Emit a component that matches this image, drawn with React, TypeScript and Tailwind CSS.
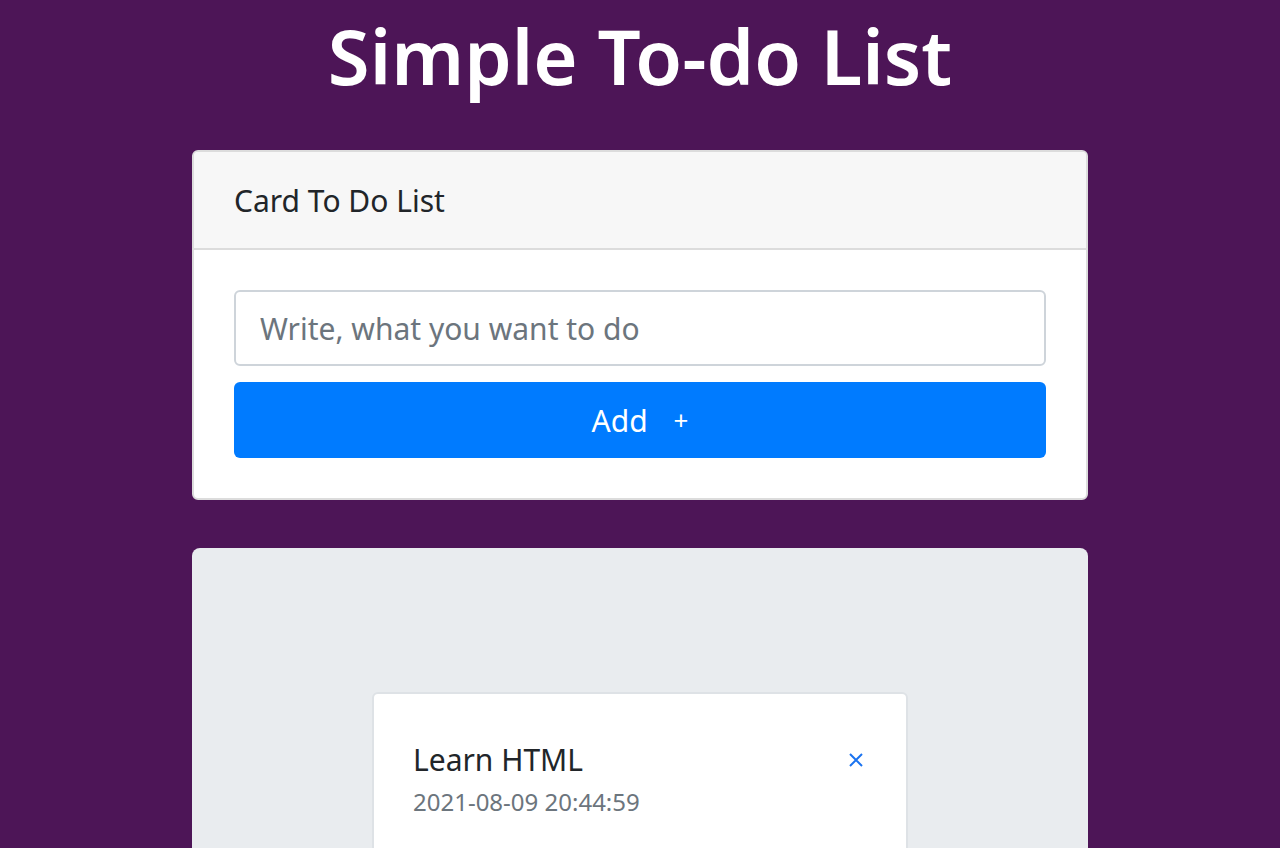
import React, { useState } from 'react';

// Simple to-do list page, Bootstrap-like look
interface Todo {
  id: number;
  text: string;
  date: string;
}

export default function App() {
  const [value, setValue] = useState('');
  const [todos, setTodos] = useState<Todo[]>([
    { id: 1, text: 'Learn HTML', date: '2021-08-09 20:44:59' },
  ]);

  const handleAdd = () => {
    if (!value.trim()) return;
    setTodos([...todos, { id: Date.now(), text: value.trim(), date: new Date().toISOString().slice(0, 19).replace('T', ' ') }]);
    setValue('');
  };

  return (
    <div className="min-h-[848px] bg-[#4d1557] font-['Noto_Sans',sans-serif] pb-10">
      <h1 className="text-center text-white font-semibold text-[76px] leading-[112px] h-[150px]">
        Simple To-do List
      </h1>

      <div className="w-[896px] mx-auto">
        <div className="bg-white border-2 border-[#dcdcdc] rounded-[6px] overflow-hidden">
          <div className="bg-[#f7f7f7] border-b-2 border-[#dcdcdc] h-[98px] flex items-center px-[40px]">
            <span className="text-[30px] text-[#212529]">Card To Do List</span>
          </div>
          <div className="p-[40px] flex flex-col gap-4">
            <input
              value={value}
              onChange={(e) => setValue(e.target.value)}
              placeholder="Write, what you want to do"
              className="h-[76px] w-full rounded-[6px] border-2 border-[#ced4da] px-[24px] text-[30px] text-[#495057] placeholder:text-[#6c757d] outline-none"
            />
            <button
              onClick={handleAdd}
              className="h-[76px] w-full rounded-[6px] bg-[#007bff] text-white text-[30px] flex items-center justify-center gap-[26px]"
            >
              <span>Add</span>
              <span className="text-[26px]">+</span>
            </button>
          </div>
        </div>

        <div className="mt-[48px] bg-[#e9ecef] rounded-[8px] pt-[144px] pb-[40px] flex flex-col items-center gap-6">
          {todos.map((t) => (
            <div key={t.id} className="w-[536px] bg-white border-2 border-[#dee2e6] rounded-[6px] pl-[39px] pr-[40px] pt-[46px] pb-[40px] flex justify-between items-start">
              <div>
                <div className="text-[30px] text-[#212529] leading-[40px]">{t.text}</div>
                <div className="text-[24px] text-[#6c757d] leading-[40px] mt-[2px]">{t.date}</div>
              </div>
              <button
                onClick={() => setTodos(todos.filter((x) => x.id !== t.id))}
                className="mt-[12px] mr-[2px] text-[#1a73f0]"
              >
                <svg width="16" height="16" viewBox="0 0 16 16" fill="none" stroke="currentColor" strokeWidth="2">
                  <path d="M2 2 L14 14 M14 2 L2 14" />
                </svg>
              </button>
            </div>
          ))}
        </div>
      </div>
    </div>
  );
}
